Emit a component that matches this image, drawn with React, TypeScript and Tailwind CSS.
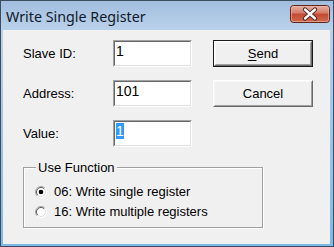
import React from 'react';

const Edit = ({ value, selected }: { value: string; selected?: boolean }) => (
  <div className="w-[79px] h-[27px] border border-t-[#a0a0a0] border-l-[#a0a0a0] border-b-white border-r-white">
    <div className="h-full border border-t-[#696969] border-l-[#696969] border-b-[#e3e3e3] border-r-[#e3e3e3] bg-white pl-[1px] pt-[1px] text-[14px] leading-[16px]">
      {selected ? <span className="bg-[#3399ff] text-white">{value}</span> : value}
    </div>
  </div>
);

const Button = ({ children, isDefault }: { children: React.ReactNode; isDefault?: boolean }) => (
  <div className={isDefault ? 'w-[100px] h-[27px] border border-[#1a1a1a]' : 'w-[100px] h-[27px]'}>
    <div className="h-full border border-t-white border-l-white border-b-[#696969] border-r-[#696969]">
      <div className="h-full border border-t-[#f8f8f8] border-l-[#f8f8f8] border-b-[#a0a0a0] border-r-[#a0a0a0] bg-[#f0f0f0] flex items-center justify-center text-[13px]">
        {children}
      </div>
    </div>
  </div>
);

const Radio = ({ checked }: { checked?: boolean }) => (
  <svg width="12" height="12" viewBox="0 0 12 12">
    <circle cx="6" cy="6" r="5.5" fill="#ffffff" />
    <path d="M2.1 9.9 A5.5 5.5 0 0 1 9.9 2.1" fill="none" stroke="#a0a0a0" strokeWidth="1" />
    <path d="M9.9 2.1 A5.5 5.5 0 0 1 2.1 9.9" fill="none" stroke="#ffffff" strokeWidth="1" />
    <path d="M2.8 9.2 A4.5 4.5 0 0 1 9.2 2.8" fill="none" stroke="#5a5a5a" strokeWidth="1" />
    <path d="M9.2 2.8 A4.5 4.5 0 0 1 2.8 9.2" fill="none" stroke="#dcdcdc" strokeWidth="1" />
    {checked && <circle cx="6" cy="6" r="2.3" fill="#000" />}
  </svg>
);

const CloseButton = () => (
  <svg width="40" height="18" viewBox="0 0 40 18">
    <defs>
      <linearGradient id="cb" x1="0" y1="0" x2="0" y2="1">
        <stop offset="0" stopColor="#e8b3a6" />
        <stop offset="0.45" stopColor="#d47a66" />
        <stop offset="0.5" stopColor="#c24a33" />
        <stop offset="1" stopColor="#cf6a4c" />
      </linearGradient>
    </defs>
    <rect x="0.5" y="0.5" width="39" height="17" rx="3" fill="url(#cb)" stroke="#5f2318" />
    <rect x="1.5" y="1.5" width="37" height="15" rx="2" fill="none" stroke="#eebcae" strokeOpacity="0.6" />
    <path d="M15 4.5 L25 13.5 M25 4.5 L15 13.5" stroke="#3d1a14" strokeWidth="4.2" strokeLinecap="round" />
    <path d="M15 4.5 L25 13.5 M25 4.5 L15 13.5" stroke="#ffffff" strokeWidth="2.4" strokeLinecap="round" />
  </svg>
);

export default function App() {
  return (
    <div className="w-[334px] h-[247px] flex flex-col border border-[#3c4d61] bg-[#7cb9e6] font-['Liberation_Sans',Arial,sans-serif] text-black">
      <div className="h-[29px] flex items-center justify-between pl-[5px] pr-[3px] bg-[linear-gradient(#a2bedf,#bad1ea)]">
        <span className="font-['Noto_Sans',sans-serif] text-[14.3px] text-[#101a28] pt-[2px]">Write Single Register</span>
        <div className="pb-[3px]">
          <CloseButton />
        </div>
      </div>
      <div className="flex-1 flex px-[2px] pb-[2px] pr-[3px] bg-[linear-gradient(#bad1ea,#7cb9e6)]">
        <div className="flex-1 bg-[#f0f0f0] pl-[20px] pt-[10px] text-[13px]">
          <div className="flex flex-col gap-[13px]">
            <div className="flex items-center">
              <span className="w-[90px]">Slave ID:</span>
              <Edit value="1" />
              <div className="ml-[21px]">
                <Button isDefault>
                  <span><span className="underline underline-offset-2">S</span>end</span>
                </Button>
              </div>
            </div>
            <div className="flex items-center">
              <span className="w-[90px]">Address:</span>
              <Edit value="101" />
              <div className="ml-[21px]">
                <Button>Cancel</Button>
              </div>
            </div>
            <div className="flex items-center">
              <span className="w-[90px]">Value:</span>
              <Edit value="1" selected />
            </div>
          </div>
          <fieldset className="mt-[13px] w-[240px] h-[68px] border border-[#a0a0a0] shadow-[inset_1px_1px_0_#fff,1px_1px_0_#fff] pl-[11px]">
            <legend className="ml-[1px] px-[2px] bg-[#f0f0f0] leading-[15px]">Use Function</legend>
            <div className="flex flex-col gap-[4px] pt-[9px]">
              <div className="flex items-center gap-[7px] h-[16px]">
                <Radio checked />
                <span>06: Write single register</span>
              </div>
              <div className="flex items-center gap-[7px] h-[16px]">
                <Radio />
                <span>16: Write multiple registers</span>
              </div>
            </div>
          </fieldset>
        </div>
      </div>
    </div>
  );
}
